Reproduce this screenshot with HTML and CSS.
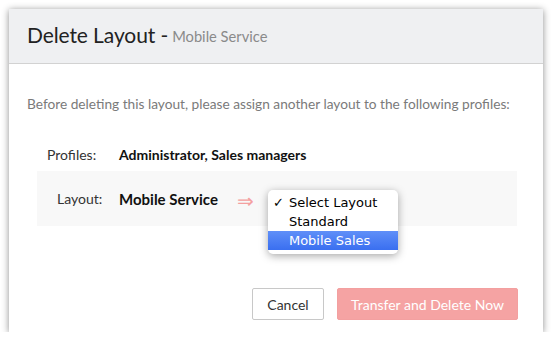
FILE: index.html
```html
<!DOCTYPE html>
<html>
<head>
<meta charset="utf-8">
<link rel="stylesheet" href="styles.css">
</head>
<body>
<div class="dialog">
  <div class="header">
    <span class="title">Delete Layout -</span>
    <span class="subtitle">Mobile Service</span>
  </div>
  <div class="body">
    <p class="intro">Before deleting this layout, please assign another layout to the following profiles:</p>
    <div class="row profiles">
      <span class="label">Profiles:</span>
      <span class="value">Administrator, Sales managers</span>
    </div>
    <div class="row layout">
      <span class="label">Layout:</span>
      <span class="value big">Mobile Service</span>
      <span class="arrow">⇒</span>
      <div class="select">
        <div class="menu">
          <div class="opt"><span class="check">✓</span>Select Layout</div>
          <div class="opt">Standard</div>
          <div class="opt selected">Mobile Sales</div>
        </div>
      </div>
    </div>
  </div>
  <div class="footer">
    <button class="btn cancel">Cancel</button>
    <button class="btn primary">Transfer and Delete Now</button>
  </div>
</div>
</body>
</html>
```
FILE: styles.css
```css
* { box-sizing: border-box; }
body {
  margin: 0;
  background: #fff;
  font-family: Lato, "Open Sans", sans-serif;
}
.dialog {
  margin: 9px 0 0 9px;
  width: 534px;
  height: 323px;
  background: #fff;
  box-shadow: 0 1px 7px rgba(0,0,0,0.45);
  display: flex;
  flex-direction: column;
}
.header {
  height: 55px;
  flex: none;
  background: #eff0f2;
  border-bottom: 1px solid #d2d2d2;
  padding: 0 0 4px 18px;
  display: flex;
  align-items: center;
  gap: 4px;
}
.title {
  font-size: 21px;
  color: #222;
  letter-spacing: -0.1px;
}
.subtitle {
  font-size: 14.7px;
  color: #8a8a8a;
  padding-top: 4px;
}
.body {
  padding: 0 26px 0 28px;
  flex: 1;
}
.intro {
  margin: 31px 0 0 -10px;
  font-size: 13.7px;
  color: #7a7a7a;
  white-space: nowrap;
}
.row {
  display: flex;
  align-items: center;
}
.profiles {
  height: 34px;
  margin-top: 25px;
  padding-left: 10px;
}
.profiles .label { width: 72px; }
.label {
  font-size: 14px;
  color: #333;
}
.value {
  font-size: 14px;
  font-weight: bold;
  color: #111;
}
.value.big { font-size: 15px; }
.layout {
  height: 55px;
  background: #f8f8f8;
  padding-left: 20px;
  position: relative;
}
.layout .label { width: 62px; }
.arrow {
  color: #f4a0a0;
  font-size: 20px;
  margin: 4px 0 0 19px;
}
.select {
  position: relative;
  width: 130px;
  height: 20px;
  margin-left: 14px;
}
.menu {
  position: absolute;
  left: 0;
  top: 1px;
  width: 130px;
  background: #fff;
  border-radius: 5px;
  box-shadow: 0 2px 8px rgba(0,0,0,0.35);
  padding: 3px 0 4px;
  font-family: "DejaVu Sans", sans-serif;
  font-size: 13px;
  color: #000;
}
.opt {
  height: 19px;
  line-height: 19px;
  padding-left: 21px;
  position: relative;
}
.check {
  position: absolute;
  left: 5px;
}
.opt.selected {
  background: linear-gradient(#5f8ff8, #3a6ff0);
  color: #fff;
}
.footer {
  display: flex;
  justify-content: flex-end;
  gap: 13px;
  padding: 0 25px 12px 0;
}
.btn {
  height: 32px;
  font-family: Lato, "Open Sans", sans-serif;
  font-size: 14px;
  border-radius: 2px;
  padding: 0;
  white-space: nowrap;
}
.cancel {
  width: 72px;
  background: #fff;
  border: 1px solid #c8c8c8;
  color: #333;
}
.primary {
  width: 181px;
  background: #f5a3a3;
  border: 1px solid #f3a0a0;
  color: #fff;
}
```
